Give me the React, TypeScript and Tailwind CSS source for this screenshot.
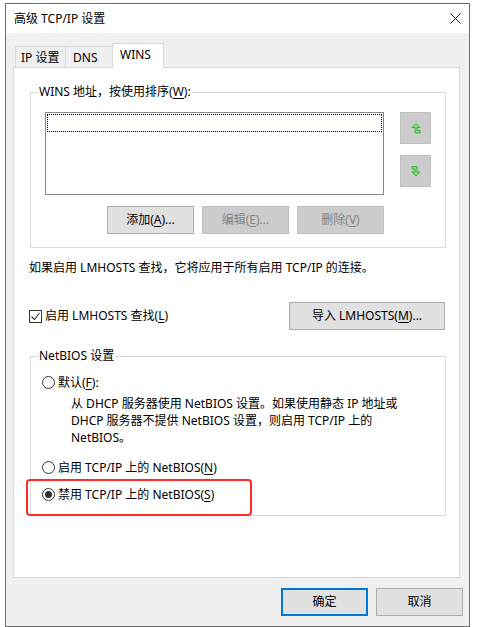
import type { ReactNode } from 'react';

const FONT = "font-['Noto_Sans','Noto_Sans_CJK_SC',sans-serif]";
const BTN = 'h-[28px] w-[87px] flex items-center justify-center border text-[12px]';
const BTN_NORMAL = `${BTN} border-[#adadad] bg-[#e1e1e1] text-black`;
const BTN_DISABLED = `${BTN} border-[#bfbfbf] bg-[#cccccc] text-[#838383]`;

function Key({ children }: { children: ReactNode }) {
  return <span className="underline underline-offset-2">{children}</span>;
}

function UpArrow() {
  return (
    <svg width="10" height="11" viewBox="0 0 10 11">
      <path
        d="M5 0.5 L9 4.5 L6 4.5 L6 7.5 L9 7.5 L9 10 L4 10 L4 4.5 L1 4.5 Z"
        fill="#7fe07f"
        stroke="#39b339"
        strokeWidth="1"
      />
    </svg>
  );
}

function DownArrow() {
  return (
    <svg width="10" height="11" viewBox="0 0 10 11">
      <path
        d="M1 0.5 L6 0.5 L6 6 L9 6 L5 10 L1 6 L4 6 L4 3 L1 3 Z"
        fill="#7fe07f"
        stroke="#39b339"
        strokeWidth="1"
      />
    </svg>
  );
}

function Radio({ checked = false }: { checked?: boolean }) {
  return (
    <span className="w-[13px] h-[13px] rounded-full border border-[#333] bg-white flex items-center justify-center shrink-0">
      {checked && <span className="w-[7px] h-[7px] rounded-full bg-[#333]" />}
    </span>
  );
}

function GroupBox({ label, className, children }: { label: string | ReactNode; className: string; children: ReactNode }) {
  return (
    <div className={`relative border border-[#dcdcdc] ${className}`}>
      <span className="absolute left-[7px] -top-[10px] bg-white px-[1px] leading-[17px]">{label}</span>
      {children}
    </div>
  );
}

export default function App() {
  return (
    <div className={`w-[479px] h-[627px] bg-white overflow-hidden text-[12px] text-black ${FONT}`}>
      <div className="ml-[5px] mt-[3px] w-[465px] h-[624px] border border-[#6b6b6b] flex flex-col">
        {/* 타이틀 바 */}
        <div className="h-[29px] bg-white flex items-center justify-between pl-[8px]">
          <span className="leading-none">高级 TCP/IP 设置</span>
          <span className="w-[28px] flex items-center justify-center">
            <svg width="11" height="11" viewBox="0 0 11 11">
              <path d="M0.5 0.5 L10.5 10.5 M10.5 0.5 L0.5 10.5" stroke="#222" strokeWidth="1" />
            </svg>
          </span>
        </div>

        <div className="flex-1 bg-[#f0f0f0] pl-[7px] pr-[9px] pt-[10px] flex flex-col">
          {/* 탭 */}
          <div className="relative z-10 h-[25px] -mb-px flex items-end pl-[2px]">
            <div className="h-[22px] w-[51px] border-l border-t border-r border-b border-[#d9d9d9] bg-[#f0f0f0] flex items-center pl-[5px] pt-[1px]">
              IP 设置
            </div>
            <div className="h-[22px] w-[46px] border-t border-b border-[#d9d9d9] bg-[#f0f0f0] flex items-center pl-[7px] pt-[1px]">
              DNS
            </div>
            <div className="h-[25px] w-[52px] border-l border-t border-r border-[#d9d9d9] bg-white flex items-center pl-[7px] pb-[2px]">
              WINS
            </div>
          </div>

          {/* 패널 */}
          <div className="relative h-[511px] bg-white border border-[#d9d9d9] flex flex-col">
            <GroupBox
              label={
                <>
                  WINS 地址，按使用排序(<Key>W</Key>):
                </>
              }
              className="ml-[16px] mt-[24px] w-[416px] h-[156px]"
            >
              <div className="flex pl-[14px] pt-[19px]">
                <div className="w-[339px] h-[83px] border border-[#828790] bg-white p-[1px]">
                  <div className="h-[18px] border border-dotted border-black" />
                </div>
                <div className="ml-[16px] flex flex-col gap-[11px]">
                  <div className="w-[31px] h-[32px] border border-[#bfbfbf] bg-[#cccccc] flex items-center justify-center">
                    <UpArrow />
                  </div>
                  <div className="w-[31px] h-[32px] border border-[#bfbfbf] bg-[#cccccc] flex items-center justify-center">
                    <DownArrow />
                  </div>
                </div>
              </div>
              <div className="flex gap-[8px] ml-[76px] mt-[11px]">
                <button className={BTN_NORMAL}>
                  添加(<Key>A</Key>)...
                </button>
                <button className={BTN_DISABLED}>
                  编辑(<Key>E</Key>)...
                </button>
                <button className={BTN_DISABLED}>
                  删除(<Key>V</Key>)
                </button>
              </div>
            </GroupBox>

            <p className="ml-[15px] mt-[11px] leading-[17px]">
              如果启用 LMHOSTS 查找，它将应用于所有启用 TCP/IP 的连接。
            </p>

            <div className="mt-[26px] flex items-center justify-between pl-[15px] pr-[14px]">
              <label className="flex items-center gap-[3px]">
                <span className="w-[13px] h-[13px] border border-[#333] bg-white flex items-center justify-center">
                  <svg width="11" height="11" viewBox="0 0 11 11">
                    <path d="M1.5 5.5 L4.5 8.5 L9.5 2" fill="none" stroke="#333" strokeWidth="1.1" />
                  </svg>
                </span>
                <span>
                  启用 LMHOSTS 查找(<Key>L</Key>)
                </span>
              </label>
              <button className="h-[28px] w-[156px] flex items-center justify-center border border-[#adadad] bg-[#e1e1e1]">
                导入 LMHOSTS(<Key>M</Key>)...
              </button>
            </div>

            <GroupBox label="NetBIOS 设置" className="ml-[16px] mt-[26px] w-[416px] h-[160px]">
              <div className="flex flex-col pl-[11px] pt-[17px]">
                <div className="flex items-center gap-[3px] h-[17px]">
                  <Radio />
                  <span>
                    默认(<Key>F</Key>):
                  </span>
                </div>
                <div className="ml-[29px] mt-[4px] leading-[17px]">
                  <p>从 DHCP 服务器使用 NetBIOS 设置。如果使用静态 IP 地址或</p>
                  <p>DHCP 服务器不提供 NetBIOS 设置，则启用 TCP/IP 上的</p>
                  <p>NetBIOS。</p>
                </div>
                <div className="flex items-center gap-[3px] h-[17px] mt-[13px]">
                  <Radio />
                  <span>
                    启用 TCP/IP 上的 NetBIOS(<Key>N</Key>)
                  </span>
                </div>
                <div className="flex items-center gap-[3px] h-[17px] mt-[10px]">
                  <Radio checked />
                  <span>
                    禁用 TCP/IP 上的 NetBIOS(<Key>S</Key>)
                  </span>
                </div>
              </div>
            </GroupBox>

            {/* 빨간 강조 표시 */}
            <div className="absolute left-[12px] top-[411px] w-[226px] h-[37px] border-2 border-[#ff2a2a] rounded-[4px]" />
          </div>

          {/* 하단 버튼 */}
          <div className="mt-[10px] -mr-[3px] flex justify-end gap-[8px]">
            <button className="h-[28px] w-[87px] flex items-center justify-center border-2 border-[#0078d7] bg-[#e1e1e1]">
              确定
            </button>
            <button className={BTN_NORMAL}>取消</button>
          </div>
        </div>
      </div>
    </div>
  );
}
